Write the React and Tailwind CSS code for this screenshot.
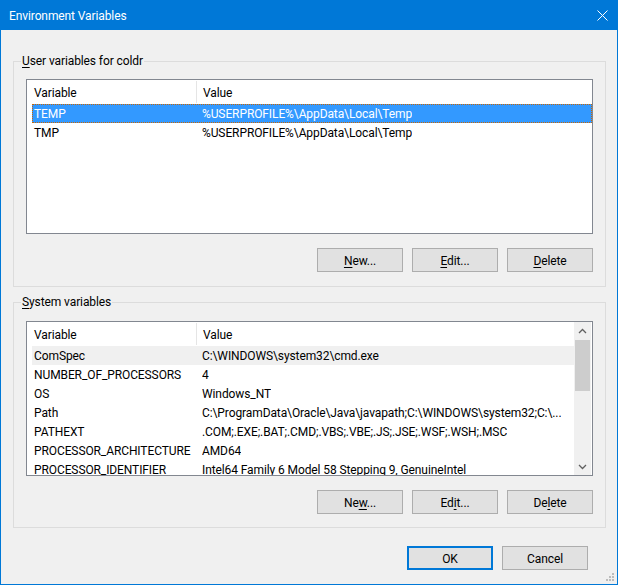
import React from "react";

const userVars = [
  ["TEMP", "%USERPROFILE%\\AppData\\Local\\Temp"],
  ["TMP", "%USERPROFILE%\\AppData\\Local\\Temp"],
];

const sysVars = [
  ["ComSpec", "C:\\WINDOWS\\system32\\cmd.exe"],
  ["NUMBER_OF_PROCESSORS", "4"],
  ["OS", "Windows_NT"],
  ["Path", "C:\\ProgramData\\Oracle\\Java\\javapath;C:\\WINDOWS\\system32;C:\\..."],
  ["PATHEXT", ".COM;.EXE;.BAT;.CMD;.VBS;.VBE;.JS;.JSE;.WSF;.WSH;.MSC"],
  ["PROCESSOR_ARCHITECTURE", "AMD64"],
  ["PROCESSOR_IDENTIFIER", "Intel64 Family 6 Model 58 Stepping 9, GenuineIntel"],
];

function Btn({ pre = "", k = "", post = "", primary = false }) {
  return (
    <button
      className={
        primary
          ? "w-[86px] h-[24px] bg-[#e1e1e1] border-2 border-[#0078d7] text-[12px] text-black flex items-center justify-center"
          : "w-[86px] h-[24px] bg-[#e1e1e1] border border-[#adadad] text-[12px] text-black flex items-center justify-center"
      }
    >
      <span className="leading-[16px] pt-[1px]">
        {pre}
        {k ? <u className="underline underline-offset-[2px]">{k}</u> : null}
        {post}
      </span>
    </button>
  );
}

function Chevron({ up }) {
  return (
    <svg width="9" height="6" viewBox="0 0 9 6">
      <path
        d={up ? "M1 5 L4.5 1.5 L8 5" : "M1 1 L4.5 4.5 L8 1"}
        fill="none"
        stroke="#606060"
        strokeWidth="1.3"
      />
    </svg>
  );
}

function Scrollbar() {
  return (
    <div className="w-[17px] mr-px h-full bg-[#f0f0f0] flex flex-col shrink-0">
      <div className="h-[17px] flex items-center justify-center shrink-0">
        <Chevron up />
      </div>
      <div className="flex-1 flex flex-col pt-[1px]">
        <div className="h-[51px] mx-px bg-[#cdcdcd]" />
      </div>
      <div className="h-[17px] flex items-center justify-center shrink-0">
        <Chevron />
      </div>
    </div>
  );
}

function ListView({ rows, selected, focused, scroll }) {
  return (
    <div className="w-[567px] h-[155px] border border-[#828790] bg-white flex overflow-hidden shrink-0">
      <div className="flex-1 min-w-0 flex flex-col overflow-hidden">
        <div className="h-[24px] flex shrink-0 items-stretch text-[#000]">
          <div className="w-[169px] flex items-center pl-[7px] pt-[2px]">
            <span className="leading-[16px]">Variable</span>
          </div>
          <div className="w-px my-[1px] bg-[#e5e5e5]" />
          <div className="flex items-center pl-[6px] pt-[2px]">
            <span className="leading-[16px]">Value</span>
          </div>
        </div>
        {rows.map(([name, value], i) => {
          const isSel = i === selected;
          let cls =
            "h-[19px] ml-[5px] flex shrink-0 items-start pt-[2px] whitespace-nowrap leading-[17px]";
          if (isSel && focused)
            cls =
              "h-[19px] ml-[5px] flex shrink-0 items-start pt-[2px] whitespace-nowrap leading-[17px] bg-[#3399ff] text-white outline-1 outline-dotted outline-[#cc6600] -outline-offset-1";
          else if (isSel)
            cls =
              "h-[19px] ml-[5px] flex shrink-0 items-start pt-[2px] whitespace-nowrap leading-[17px] bg-[#f0f0f0]";
          return (
            <div key={name} className={cls}>
              <div className="w-[170px] pl-[2px] shrink-0 overflow-hidden">{name}</div>
              <div className="overflow-hidden">{value}</div>
            </div>
          );
        })}
      </div>
      {scroll ? <Scrollbar /> : null}
    </div>
  );
}

function Group({ legendKey, legendRest, rows, selected, focused, scroll, btn, top, ptList, pb }) {
  return (
    <fieldset
      className={
        "w-[593px] border border-[#dcdcdc] px-0 m-0 " + top + " " + pb
      }
    >
      <legend className="ml-[7px] px-[1px] leading-[16px] text-[12px]">
        <u className="underline underline-offset-[2px]">{legendKey}</u>
        {legendRest}
      </legend>
      <div className={"flex flex-col pl-[12px] " + ptList}>
        <ListView rows={rows} selected={selected} focused={focused} scroll={scroll} />
        <div className="w-[567px] flex justify-end gap-[9px] mt-[14px]">
          <Btn pre={btn[0][0]} k={btn[0][1]} post={btn[0][2]} />
          <Btn pre={btn[1][0]} k={btn[1][1]} post={btn[1][2]} />
          <Btn pre={btn[2][0]} k={btn[2][1]} post={btn[2][2]} />
        </div>
      </div>
    </fieldset>
  );
}

export default function App() {
  return (
    <div className="w-[618px] h-[585px] bg-[#f0f0f0] border border-[#0078d7] flex flex-col relative overflow-hidden font-['Roboto',sans-serif] text-[12px] tracking-[-0.1px] text-black">
      <div className="h-[29px] bg-[#0078d7] flex items-center justify-between pl-[8px] pr-[9px] text-white shrink-0">
        <span className="leading-[16px] pt-[1px]">Environment Variables</span>
        <svg width="11" height="11" viewBox="0 0 11 11">
          <path d="M0.5 0.5 L10.5 10.5 M10.5 0.5 L0.5 10.5" stroke="#ffffff" strokeWidth="1" fill="none" />
        </svg>
      </div>
      <div className="flex flex-col pl-[12px]">
        <Group
          legendKey="U"
          legendRest="ser variables for coldr"
          rows={userVars}
          selected={0}
          focused
          scroll={false}
          top="mt-[23px]"
          ptList="pt-[10px]"
          pb="pb-[14px]"
          btn={[
            ["", "N", "ew..."],
            ["", "E", "dit..."],
            ["", "D", "elete"],
          ]}
        />
        <Group
          legendKey="S"
          legendRest="ystem variables"
          rows={sysVars}
          selected={0}
          focused={false}
          scroll
          top="mt-[7px]"
          ptList="pt-[11px]"
          pb="pb-[13px]"
          btn={[
            ["Ne", "w", "..."],
            ["Ed", "i", "t..."],
            ["De", "l", "ete"],
          ]}
        />
      </div>
      <div className="flex justify-end gap-[9px] pr-[29px] mt-[18px]">
        <Btn pre="OK" primary />
        <Btn pre="Cancel" />
      </div>
      <svg className="absolute right-[2px] bottom-[2px]" width="10" height="10" viewBox="0 0 10 10">
        <rect x="7" y="1" width="2" height="2" fill="#bcbcbc" />
        <rect x="4" y="4" width="2" height="2" fill="#bcbcbc" />
        <rect x="7" y="4" width="2" height="2" fill="#bcbcbc" />
        <rect x="1" y="7" width="2" height="2" fill="#bcbcbc" />
        <rect x="4" y="7" width="2" height="2" fill="#bcbcbc" />
        <rect x="7" y="7" width="2" height="2" fill="#bcbcbc" />
      </svg>
    </div>
  );
}
